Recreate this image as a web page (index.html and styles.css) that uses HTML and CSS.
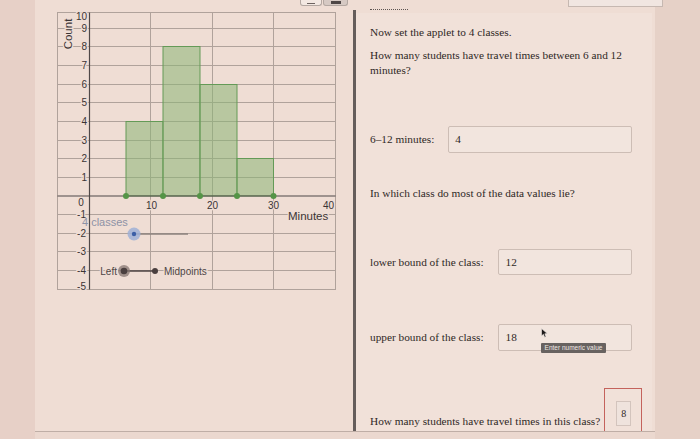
FILE: index.html
```html
<!DOCTYPE html>
<html>
<head>
<meta charset="utf-8">
<link rel="stylesheet" href="styles.css">
</head>
<body>
<div class="page">
  <div class="strip-left"></div>
  <div class="main">
    <div class="main-body">
      <div class="graph-col">
        <div class="gtop">
          <div class="tbtn tbtn-a"><span class="dash"></span></div>
          <div class="tbtn tbtn-b"><span class="blk"></span></div>
        </div>
        <svg class="graph" width="290" height="286" viewBox="50 8 290 286">
          <g stroke="#b0a29b" stroke-width="1" fill="none">
            <rect x="57.5" y="12.5" width="278" height="277"/>
            <line x1="57.5" x2="335.5" y1="28.5" y2="28.5"/>
            <line x1="57.5" x2="335.5" y1="46.5" y2="46.5"/>
            <line x1="57.5" x2="335.5" y1="65.5" y2="65.5"/>
            <line x1="57.5" x2="335.5" y1="84.5" y2="84.5"/>
            <line x1="57.5" x2="335.5" y1="102.5" y2="102.5"/>
            <line x1="57.5" x2="335.5" y1="121.5" y2="121.5"/>
            <line x1="57.5" x2="335.5" y1="140.5" y2="140.5"/>
            <line x1="57.5" x2="335.5" y1="158.5" y2="158.5"/>
            <line x1="57.5" x2="335.5" y1="177.5" y2="177.5"/>
            <line x1="57.5" x2="335.5" y1="214.5" y2="214.5"/>
            <line x1="57.5" x2="335.5" y1="233.5" y2="233.5"/>
            <line x1="57.5" x2="335.5" y1="251.5" y2="251.5"/>
            <line x1="57.5" x2="335.5" y1="270.5" y2="270.5"/>
            <line x1="150.5" x2="150.5" y1="12.5" y2="289.5"/>
            <line x1="212.5" x2="212.5" y1="12.5" y2="289.5"/>
            <line x1="273.5" x2="273.5" y1="12.5" y2="289.5"/>
          </g>
          <g fill="#8ab574" fill-opacity="0.55" stroke="#649a57" stroke-width="1">
            <rect x="126" y="121.5" width="37" height="74.5"/>
            <rect x="163" y="46.5" width="37" height="149.5"/>
            <rect x="200" y="84.5" width="37" height="111.5"/>
            <rect x="237" y="158.5" width="36.5" height="37.5"/>
          </g>
          <line x1="89.5" x2="89.5" y1="12.5" y2="289.5" stroke="#4f4848" stroke-width="1.2"/>
          <line x1="57.5" x2="335.5" y1="196" y2="196" stroke="#4f4848" stroke-width="1.2"/>
          <g fill="#559447">
            <circle cx="126" cy="196" r="3"/>
            <circle cx="163" cy="196" r="3"/>
            <circle cx="200" cy="196" r="3"/>
            <circle cx="237" cy="196" r="3"/>
            <circle cx="273.5" cy="196" r="3"/>
          </g>
          <g class="lbl-y" text-anchor="end">
            <text x="87" y="16" dy="0.35em">10</text>
            <text x="87" y="28.5" dy="0.35em">9</text>
            <text x="87" y="46.5" dy="0.35em">8</text>
            <text x="87" y="65.5" dy="0.35em">7</text>
            <text x="87" y="84.5" dy="0.35em">6</text>
            <text x="87" y="102.5" dy="0.35em">5</text>
            <text x="87" y="121.5" dy="0.35em">4</text>
            <text x="87" y="140.5" dy="0.35em">3</text>
            <text x="87" y="158.5" dy="0.35em">2</text>
            <text x="87" y="177.5" dy="0.35em">1</text>
            <text x="86" y="214.5" dy="0.35em">-1</text>
            <text x="86" y="233" dy="0.35em">-2</text>
            <text x="86" y="251.5" dy="0.35em">-3</text>
            <text x="86" y="270.5" dy="0.35em">-4</text>
            <text x="86" y="286" dy="0.35em">-5</text>
          </g>
          <g class="lbl-y" text-anchor="middle">
            <text x="81" y="202.5" dy="0.35em">0</text>
            <text x="151.5" y="205" dy="0.35em">10</text>
            <text x="212.5" y="205" dy="0.35em">20</text>
            <text x="273.5" y="205" dy="0.35em">30</text>
            <text x="328.5" y="205" dy="0.35em">40</text>
          </g>
          <text class="axis-title" x="288" y="216" dy="0.35em">Minutes</text>
          <text class="axis-title" transform="translate(71.5 34) rotate(-90)" text-anchor="middle">Count</text>
          <text class="slider-lbl" x="82" y="222" dy="0.35em">4 classes</text>
          <line x1="134" x2="188" y1="234" y2="234" stroke="#8c827e" stroke-width="1.5"/>
          <circle cx="134" cy="234" r="6.5" fill="#9fb0d6" fill-opacity="0.85"/>
          <circle cx="134" cy="234" r="2.2" fill="#3c5fa6"/>
          <text class="toggle-lbl" x="117" y="271" dy="0.35em" text-anchor="end">Left</text>
          <line x1="124" x2="155" y1="271" y2="271" stroke="#4d4242" stroke-width="1.5"/>
          <circle cx="124" cy="271" r="6" fill="#857672" fill-opacity="0.75"/>
          <circle cx="124" cy="271" r="3.3" fill="#4a3f3f"/>
          <circle cx="155" cy="271" r="3" fill="#4a3f3f"/>
          <text class="toggle-lbl" x="164" y="271" dy="0.35em">Midpoints</text>
        </svg>
      </div>
      <div class="divider"></div>
      <div class="qcol">
        <div class="qtop"><span class="dots"></span><span class="topbox"></span></div>
        <div class="qpanel">
          <p class="p1">Now set the applet to 4 classes.</p>
          <p class="p2">How many students have travel times between 6 and 12 minutes?</p>
          <div class="row row1"><span class="lbl">6–12 minutes:</span><div class="inp">4</div></div>
          <p class="p3">In which class do most of the data values lie?</p>
          <div class="row row2"><span class="lbl">lower bound of the class:</span><div class="inp">12</div></div>
          <div class="row row3"><span class="lbl">upper bound of the class:</span>
            <div class="inp">18
              <svg class="cursor" width="7" height="10" viewBox="0 0 7 10"><path d="M0.5 0.5 L0.5 8 L2.4 6.3 L3.7 9.3 L5 8.7 L3.8 5.8 L6.3 5.6 Z" fill="#1e1a1a" stroke="#f4ece8" stroke-width="0.6"/></svg>
              <span class="tip">Enter numeric value</span>
            </div>
          </div>
          <div class="row4"><span class="lbl">How many students have travel times in this class?</span><div class="redbox"><div class="mini">8</div></div></div>
        </div>
      </div>
    </div>
  </div>
  <div class="strip-right"></div>
</div>
</body>
</html>
```
FILE: styles.css
```css
html, body {
  margin: 0;
  padding: 0;
}
body {
  width: 700px;
  height: 439px;
  overflow: hidden;
  background: #e8d4cb;
  font-family: "Liberation Serif", "Times New Roman", serif;
}
.page {
  display: flex;
  width: 700px;
  height: 439px;
}
.strip-left {
  width: 35px;
  background: #e7d0c7;
}
.main {
  width: 620px;
  display: flex;
  flex-direction: column;
  background: #ebd8cf;
}
.main-body {
  height: 431px;
  display: flex;
  border-bottom: 1px solid #bfaea6;
  background: #efddd4;
}
.graph-col {
  width: 318px;
  display: flex;
  flex-direction: column;
}
.gtop {
  height: 8px;
  display: flex;
  justify-content: flex-end;
  align-items: flex-start;
  gap: 1px;
  padding-right: 5px;
}
.tbtn {
  height: 6px;
  box-sizing: border-box;
  border: 1px solid #b3a7a1;
  border-top: none;
  border-radius: 0 0 3px 3px;
  display: flex;
  align-items: flex-end;
  justify-content: center;
  padding-bottom: 1px;
}
.tbtn-a {
  width: 22px;
  background: #f3e8e2;
}
.tbtn-b {
  width: 25px;
  background: #d6c9c3;
}
.dash {
  width: 8px;
  height: 1px;
  background: #6d6360;
}
.blk {
  width: 10px;
  height: 3px;
  background: #4e4645;
}
.graph {
  display: block;
  margin-left: 15px;
}
.lbl-y text, .lbl-y {
  font-family: "Liberation Sans", Arial, sans-serif;
  font-size: 10px;
  fill: #3b3434;
  paint-order: stroke;
  stroke: #efddd4;
  stroke-width: 2.5px;
}
.axis-title {
  font-family: "Liberation Sans", Arial, sans-serif;
  font-size: 11.5px;
  fill: #3b3434;
  paint-order: stroke;
  stroke: #efddd4;
  stroke-width: 2.5px;
}
.slider-lbl {
  font-family: "Liberation Sans", Arial, sans-serif;
  font-size: 11px;
  fill: #8d92a6;
}
.toggle-lbl {
  font-family: "Liberation Sans", Arial, sans-serif;
  font-size: 10px;
  fill: #4d4545;
  paint-order: stroke;
  stroke: #efddd4;
  stroke-width: 2.5px;
}
.divider {
  width: 3px;
  margin-top: 10px;
  background: #655d5b;
}
.qcol {
  width: 296px;
  display: flex;
  flex-direction: column;
}
.qtop {
  height: 13px;
  display: flex;
  align-items: flex-start;
  position: relative;
}
.dots {
  margin-top: 9px;
  margin-left: 14px;
  width: 38px;
  height: 0;
  border-top: 1px dotted #5e5552;
  flex-shrink: 0;
}
.topbox {
  margin-left: 160px;
  width: 95px;
  height: 7px;
  box-sizing: border-box;
  border: 1px solid #c6b8b1;
  border-top: none;
  background: #f1e6e1;
  flex-shrink: 0;
}
.qpanel {
  flex: 1;
  background: #f1e1d9;
  padding: 0 20px 0 14px;
  display: flex;
  flex-direction: column;
  color: #2f2826;
  font-size: 11.3px;
  line-height: 15px;
}
.qpanel p {
  margin: 0;
}
.p1 { margin-top: 12px !important; }
.p2 { margin-top: 8px !important; }
.p3 { margin-top: 33px !important; }
.row {
  display: flex;
  align-items: center;
  gap: 14px;
}
.row1 { margin-top: 48px; height: 27px; }
.row2 { margin-top: 48px; height: 26px; }
.row3 { margin-top: 49px; height: 27px; }
.lbl {
  white-space: nowrap;
}
.inp {
  flex: 1;
  height: 100%;
  box-sizing: border-box;
  border: 1px solid #cdbdb5;
  border-radius: 2px;
  background: #f2e5de;
  padding-left: 6px;
  display: flex;
  align-items: center;
  position: relative;
}
.row2 .inp, .row3 .inp {
  padding-left: 7px;
}
.cursor {
  position: absolute;
  left: 42px;
  top: 3px;
}
.tip {
  position: absolute;
  left: 42px;
  top: 18px;
  height: 10px;
  padding: 0 4px;
  background: #686260;
  color: #efe8e4;
  font-family: "Liberation Sans", Arial, sans-serif;
  font-size: 6.5px;
  line-height: 10px;
  white-space: nowrap;
  border-radius: 1px;
}
.row4 {
  margin-top: 37px;
  height: 43px;
  display: flex;
  align-items: flex-end;
  gap: 4px;
}
.row4 .lbl {
  padding-bottom: 2px;
}
.redbox {
  width: 38px;
  height: 43px;
  box-sizing: border-box;
  border: 1.5px solid #c4625c;
  border-bottom: none;
  padding: 12px 0 0 11px;
  flex-shrink: 0;
}
.mini {
  width: 15px;
  height: 25px;
  box-sizing: border-box;
  border: 1px solid #d3c4bd;
  background: #efe3dd;
  display: flex;
  align-items: center;
  justify-content: center;
  font-size: 10px;
}
.strip-right {
  flex: 1;
  background: #e6d1c7;
}
```
